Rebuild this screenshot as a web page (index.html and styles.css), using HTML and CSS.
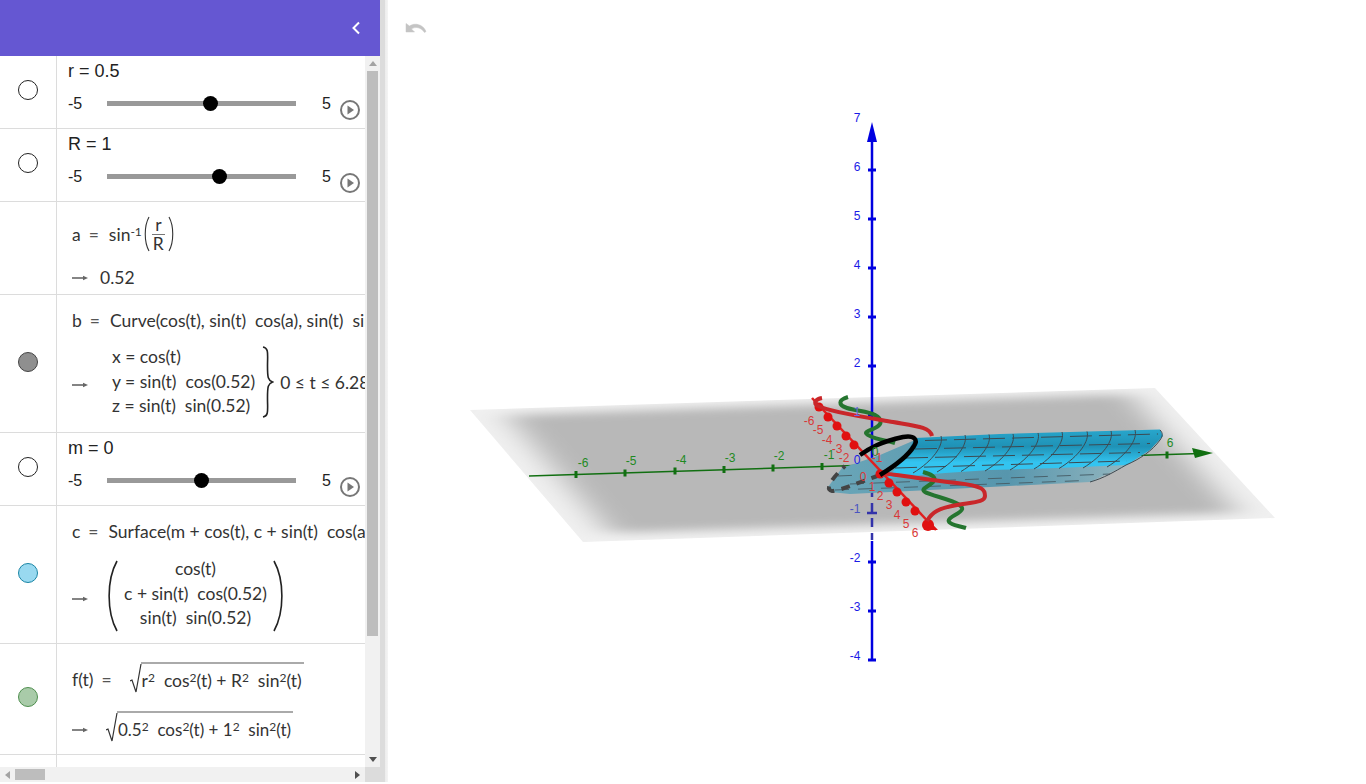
FILE: index.html
```html
<!DOCTYPE html>
<html lang="en">
<head>
<meta charset="utf-8">
<title>GeoGebra 3D</title>
<link rel="stylesheet" href="styles.css">
</head>
<body>
<div class="app">
  <aside class="algebra">
    <header class="algebra-head">
      <svg class="collapse" viewBox="0 0 10 14" width="10" height="14"><path d="M8 1.5 2.5 7 8 12.5" fill="none" stroke="#fff" stroke-width="2"/></svg>
    </header>
    <div class="algebra-main">
      <div class="rows">
        <section class="row row-slider">
          <div class="marble-cell"><span class="marble"></span></div>
          <div class="cell">
            <div class="slider-name">r = 0.5</div>
            <div class="slider-line"><span class="min">-5</span><span class="track"><i class="thumb" style="left:54.5%"></i></span><span class="max">5</span>
              <svg class="play" viewBox="0 0 20 20" width="20" height="20"><circle cx="10" cy="10" r="9" fill="none" stroke="#777" stroke-width="2"/><path d="M7.5 5.5 14 10l-6.5 4.5z" fill="#777"/></svg></div>
          </div>
        </section>
        <section class="row row-slider">
          <div class="marble-cell"><span class="marble"></span></div>
          <div class="cell">
            <div class="slider-name">R = 1</div>
            <div class="slider-line"><span class="min">-5</span><span class="track"><i class="thumb" style="left:59.5%"></i></span><span class="max">5</span>
              <svg class="play" viewBox="0 0 20 20" width="20" height="20"><circle cx="10" cy="10" r="9" fill="none" stroke="#777" stroke-width="2"/><path d="M7.5 5.5 14 10l-6.5 4.5z" fill="#777"/></svg></div>
          </div>
        </section>
        <section class="row row-a">
          <div class="marble-cell"></div>
          <div class="cell math">
            <div class="expr"><span class="lhs">a</span><span class="eq">=</span><span>sin<sup>-1</sup></span>
              <svg class="paren" viewBox="0 0 7 36" width="7" height="36"><path d="M6 1C1 10 1 26 6 35" fill="none" stroke="#333" stroke-width="1.1"/></svg>
              <span class="frac"><span>r</span><span class="frac-den">R</span></span>
              <svg class="paren" viewBox="0 0 7 36" width="7" height="36"><path d="M1 1C6 10 6 26 1 35" fill="none" stroke="#333" stroke-width="1.1"/></svg>
            </div>
            <div class="out out-a"><svg class="arrow" viewBox="0 0 16 6" width="16" height="6"><path d="M0 3h13" stroke="#666" stroke-width="1.6"/><path d="M11 .8 16 3l-5 2.2z" fill="#666"/></svg><span>0.52</span></div>
          </div>
        </section>
        <section class="row row-b">
          <div class="marble-cell"><span class="marble marble-grey"></span></div>
          <div class="cell math">
            <div class="expr expr-b"><span class="lhs">b</span><span class="eq">=</span><span class="nowrap">Curve(cos(t), sin(t)&nbsp; cos(a), sin(t)&nbsp; sin(a), t, 0, 6.28)</span></div>
            <div class="out out-b"><svg class="arrow" viewBox="0 0 16 6" width="16" height="6"><path d="M0 3h13" stroke="#666" stroke-width="1.6"/><path d="M11 .8 16 3l-5 2.2z" fill="#666"/></svg>
              <div class="stack stack-left"><span>x = cos(t)</span><span>y = sin(t)&nbsp; cos(0.52)</span><span>z = sin(t)&nbsp; sin(0.52)</span></div>
              <svg class="brace" viewBox="0 0 12 72" width="12" height="72"><path d="M1 1C7 2 5.500 8 5.500 20S6 34 10.500 36C6 38 5.500 40 5.500 52S7 70 1 71" fill="none" stroke="#222" stroke-width="1.6"/></svg>
              <span class="nowrap range">0 ≤ t ≤ 6.28</span></div>
          </div>
        </section>
        <section class="row row-slider">
          <div class="marble-cell"><span class="marble"></span></div>
          <div class="cell">
            <div class="slider-name">m = 0</div>
            <div class="slider-line"><span class="min">-5</span><span class="track"><i class="thumb" style="left:50%"></i></span><span class="max">5</span>
              <svg class="play" viewBox="0 0 20 20" width="20" height="20"><circle cx="10" cy="10" r="9" fill="none" stroke="#777" stroke-width="2"/><path d="M7.5 5.5 14 10l-6.5 4.5z" fill="#777"/></svg></div>
          </div>
        </section>
        <section class="row row-c">
          <div class="marble-cell"><span class="marble marble-blue"></span></div>
          <div class="cell math">
            <div class="expr expr-c"><span class="lhs">c</span><span class="eq">=</span><span class="nowrap">Surface(m + cos(t), c + sin(t)&nbsp; cos(a), sin(t)&nbsp; sin(a), t, 0, 6.28)</span></div>
            <div class="out out-c"><svg class="arrow" viewBox="0 0 16 6" width="16" height="6"><path d="M0 3h13" stroke="#666" stroke-width="1.6"/><path d="M11 .8 16 3l-5 2.2z" fill="#666"/></svg>
              <svg class="bigparen" viewBox="0 0 10 72" width="10" height="72"><path d="M9 1C-1.500 20-1.500 52 9 71" fill="none" stroke="#222" stroke-width="1.6"/></svg>
              <div class="stack stack-center"><span>cos(t)</span><span>c + sin(t)&nbsp; cos(0.52)</span><span>sin(t)&nbsp; sin(0.52)</span></div>
              <svg class="bigparen" viewBox="0 0 10 72" width="10" height="72"><path d="M1 1C11.500 20 11.500 52 1 71" fill="none" stroke="#222" stroke-width="1.6"/></svg>
            </div>
          </div>
        </section>
        <section class="row row-f">
          <div class="marble-cell"><span class="marble marble-green"></span></div>
          <div class="cell math">
            <div class="expr expr-f"><span class="lhs">f(t)</span><span class="eq">=</span>
              <svg class="radical" viewBox="0 0 12 32" width="12" height="32"><path d="M0 18l2-1 4 12L11 1" fill="none" stroke="#333" stroke-width="1.2"/></svg>
              <span class="radicand">r<sup>2</sup>&nbsp; cos<sup>2</sup>(t) + R<sup>2</sup>&nbsp; sin<sup>2</sup>(t)</span></div>
            <div class="out out-f"><svg class="arrow" viewBox="0 0 16 6" width="16" height="6"><path d="M0 3h13" stroke="#666" stroke-width="1.6"/><path d="M11 .8 16 3l-5 2.2z" fill="#666"/></svg>
              <svg class="radical" viewBox="0 0 12 32" width="12" height="32"><path d="M0 18l2-1 4 12L11 1" fill="none" stroke="#333" stroke-width="1.2"/></svg>
              <span class="radicand">0.5<sup>2</sup>&nbsp; cos<sup>2</sup>(t) + 1<sup>2</sup>&nbsp; sin<sup>2</sup>(t)</span></div>
          </div>
        </section>
        <section class="row row-last"><div class="marble-cell"></div><div class="cell"></div></section>
      </div>
      <div class="vscroll">
        <button class="sb-btn"><i class="tri tri-up"></i></button>
        <div class="vtrack"><div class="vthumb"></div></div>
        <button class="sb-btn"><i class="tri tri-down"></i></button>
      </div>
    </div>
    <div class="hscroll">
      <button class="sb-btn-h"><i class="tri tri-left"></i></button>
      <div class="htrack"><div class="hthumb"></div></div>
      <button class="sb-btn-h"><i class="tri tri-right"></i></button>
      <div class="corner"></div>
    </div>
  </aside>
  <div class="splitter"></div>
  <main class="graphics">
    <svg class="scene" viewBox="388 0 978 782" width="978" height="782">
      <defs>
        <clipPath id="planeClip"><polygon points="470,410 1155,388 1275,518 583,542"/></clipPath>
        <filter id="soft" x="-20%" y="-40%" width="140%" height="180%"><feGaussianBlur stdDeviation="17 5"/></filter>
        <linearGradient id="topGrad" x1="0" y1="0" x2="0" y2="1"><stop offset="0" stop-color="#28a6cc"/><stop offset=".35" stop-color="#1f92b6"/><stop offset=".68" stop-color="#33c4f0"/><stop offset="1" stop-color="#33c4f0"/></linearGradient>
        <linearGradient id="underGrad" x1="0" y1="0" x2="1" y2="0"><stop offset="0" stop-color="#6aa6b8"/><stop offset=".6" stop-color="#5796ad"/><stop offset="1" stop-color="#93b6bf"/></linearGradient>
        <path id="trans" d="M0 0C3 9-8 25-28 37" fill="none" stroke="#3c4a52" stroke-width="1"/>
        <path id="tick" d="M0-3.500V3.500" stroke="#116f11" stroke-width="3"/>
        <path id="ztick" d="M-4 0H4" stroke="#0000e0" stroke-width="3"/>
      </defs>

      <path class="undo" d="M406 23.500v8.500h8.500l-3-3c3.500-2.500 9.500-2 13 3.500l1.500-1c-3-7.500-11.500-9-16.500-5.500z"/>

      <polygon points="470,410 1155,388 1275,518 583,542" fill="#f0f0f0"/>
      <g clip-path="url(#planeClip)"><polygon points="507,415 1130,394 1238,513 610,533" fill="#b8b8b8" filter="url(#soft)"/></g>

      <path d="M872 130V470" stroke="#0000e0" stroke-width="2.500"/>
      <polygon points="872,122 877,142 867,142" fill="#0000e0"/>
      <g>
        <use href="#ztick" x="872" y="170"/><use href="#ztick" x="872" y="219"/><use href="#ztick" x="872" y="268"/><use href="#ztick" x="872" y="317"/><use href="#ztick" x="872" y="366"/><use href="#ztick" x="872" y="415"/>
        <use href="#ztick" x="872" y="562"/><use href="#ztick" x="872" y="611"/><use href="#ztick" x="872" y="660"/>
      </g>
      <path d="M872 541V661" stroke="#0000e0" stroke-width="2.500"/>
      <path d="M872 488V540" stroke="#3333aa" stroke-width="2.500" stroke-dasharray="9 6"/>
      <path d="M867 513H877" stroke="#3333aa" stroke-width="2.500"/>

      <path d="M529 476 870 465" stroke="#116f11" stroke-width="1.500"/>
      <path d="M1120 456 1200 453.500" stroke="#116f11" stroke-width="1.500"/>
      <polygon points="1213,453 1192,448 1195,458" fill="#116f11"/>
      <use href="#tick" x="576" y="474.500"/><use href="#tick" x="625" y="473"/><use href="#tick" x="675" y="471"/><use href="#tick" x="724" y="469.500"/><use href="#tick" x="773" y="468"/><use href="#tick" x="822" y="466.500"/><use href="#tick" x="1167" y="455"/>

      <polygon points="915,440 880,455 842,468 828,487 830,492 850,494 990,487 1090,482 1127,465 1000,460" fill="url(#underGrad)"/>
      <polygon points="915,438 1000,434 1160,429.500 1163,436 1150,450 1127,465 1057,468 990,470 945,473 888,478 904,458" fill="url(#topGrad)"/>
      <g class="surface-lines">
        <path d="M925 440.500 1158 434M915 449 1150 443.500M906 458 1140 452.500M895 468 1127 461"/>
        <path class="under" d="M850 484 1110 474M838 476 860 475M835 490 1085 480.500"/>
      </g>
      <use href="#trans" x="1135" y="430"/><use href="#trans" x="1111" y="431"/><use href="#trans" x="1087" y="431.500"/><use href="#trans" x="1062" y="432"/><use href="#trans" x="1038" y="433"/><use href="#trans" x="1013" y="434"/><use href="#trans" x="989" y="434.500"/><use href="#trans" x="965" y="435"/><use href="#trans" x="941" y="436"/>
      <path d="M1160 430c3 3 3 6 0 10-8 11-20 19-34 25-12 7-22 13-36 17" fill="none" stroke="#3c4a52" stroke-width="1"/>

      <path d="M880 475C862 481 843 490 832 491 825 490 830 480 845 466" fill="none" stroke="#444" stroke-width="4" stroke-dasharray="9 7"/>

      <path d="M812 398 936 530" stroke="#e02020" stroke-width="2.500"/>
      <g fill="#e01010">
        <circle cx="819" cy="407" r="4.500"/><circle cx="828" cy="417" r="4.500"/><circle cx="837" cy="426" r="4.500"/><circle cx="846" cy="436" r="4.500"/><circle cx="854" cy="445" r="4.500"/>
        <circle cx="880" cy="474" r="4.500"/><circle cx="889" cy="483" r="4.500"/><circle cx="897" cy="492" r="4.500"/><circle cx="906" cy="502" r="4.500"/><circle cx="915" cy="511" r="4.500"/><circle cx="928" cy="525" r="6"/>
      </g>
      <path d="M938 530 930 522 927 530z" fill="#e01010"/>

      <path class="curve-green" d="M848 397C838 400 838 405 847 408S868 411 875 415 883 424 875 428 862 432 870 436 885 440 895 443"/>
      <path class="curve-green" d="M923 472C930 474 938 477 933 482S920 489 925 492 952 500 958 504 964 510 955 515 948 522 952 524 960 526 966 528"/>
      <path class="curve-red" d="M822 398C816 399 812 403 818 406 830 412 870 418 893 422S930 427 932 436"/>
      <path class="curve-red" d="M880 473C900 475 930 480 957 483S985 490 985 496 975 502 957 505 932 512 927 521"/>
      <path d="M860 455C870 448 880 442 903 437 915 435 918 440 914 446 908 456 893 467 880 475" fill="none" stroke="#000" stroke-width="4.500"/>

      <g class="lbl lbl-z">
        <text x="857" y="122">7</text><text x="857" y="171">6</text><text x="857" y="220">5</text><text x="857" y="269">4</text><text x="857" y="318">3</text><text x="857" y="367">2</text><text x="857" y="416" class="faint">1</text><text x="857" y="464">0</text><text x="855" y="513" class="dim">-1</text><text x="855" y="562">-2</text><text x="855" y="611">-3</text><text x="855" y="660">-4</text>
      </g>
      <g class="lbl lbl-x">
        <text x="583" y="467">-6</text><text x="631" y="465">-5</text><text x="681" y="464">-4</text><text x="730" y="462">-3</text><text x="779" y="460">-2</text><text x="829" y="459">-1</text><text x="875" y="456">0</text><text x="1170" y="447">6</text>
      </g>
      <g class="lbl lbl-y">
        <text x="809" y="425">-6</text><text x="818" y="434">-5</text><text x="827" y="444">-4</text><text x="837" y="453">-3</text><text x="844" y="462">-2</text><text x="877" y="462">-1</text><text x="863" y="481">0</text><text x="872" y="491">1</text><text x="880" y="500">2</text><text x="889" y="509">3</text><text x="897" y="519">4</text><text x="906" y="528">5</text><text x="915" y="537">6</text>
      </g>
    </svg>
  </main>
</div>
</body>
</html>
```

FILE: styles.css
```css
* { box-sizing: border-box; }
html, body { margin: 0; padding: 0; background: #fff; overflow: hidden; }
body { height: 784px; }
.app { display: flex; height: 782px; font-family: "Liberation Sans", Arial, sans-serif; color: #111; }

.algebra { width: 380px; flex: none; display: flex; flex-direction: column; }
.algebra-head { height: 56px; flex: none; background: #6557d2; display: flex; align-items: center; justify-content: flex-end; padding-right: 19px; }
.algebra-main { flex: 1; min-height: 0; display: flex; }
.rows { flex: 1; min-width: 0; overflow: hidden; background: #fff; }

.row { display: flex; border-bottom: 1px solid #dcdcdc; overflow: hidden; }
.row-slider { height: 73px; }
.row-a { height: 93px; }
.row-b { height: 138px; }
.row-c { height: 138px; }
.row-f { height: 111px; }
.row-last { height: 40px; border-bottom: 0; }

.marble-cell { width: 57px; flex: none; border-right: 1px solid #dcdcdc; display: flex; align-items: center; justify-content: center; padding-bottom: 4px; }
.marble { width: 20px; height: 20px; border-radius: 50%; border: 1px solid #222; background: #fff; display: block; }
.marble-grey { background: #8f8f8f; border-color: #444; }
.marble-blue { background: #99d9f0; border-color: #1a85a5; }
.marble-green { background: #a9cba9; border-color: #4f8f4f; }

.cell { flex: 1; min-width: 0; padding-left: 11px; overflow: hidden; }
.slider-name { font-size: 18px; line-height: 20px; padding-top: 5px; color: #222; }
.slider-line { display: flex; align-items: center; height: 20px; margin-top: 13px; font-size: 16px; color: #222; }
.min { width: 39px; flex: none; }
.track { width: 189px; flex: none; height: 5px; background: #999; position: relative; margin-top: -1px; }
.thumb { position: absolute; top: -5px; width: 15px; height: 15px; margin-left: -7.5px; border-radius: 50%; background: #000; }
.max { margin-left: 26px; width: 8px; flex: none; }
.play { margin-left: 10px; margin-top: 12px; flex: none; }

.math { font-family: Lato, "Liberation Sans", sans-serif; font-size: 17.5px; color: #333; padding-left: 15px; white-space: nowrap; }
.nowrap { white-space: nowrap; }
.expr { display: flex; align-items: center; }
.lhs { margin-right: 8px; }
.eq { margin-right: 10px; color: #555; }
sup { font-size: 12px; line-height: 0; vertical-align: 5px; }
.paren { margin-left: 1px; flex: none; }
.frac { display: inline-flex; flex-direction: column; align-items: center; line-height: 18px; padding: 0 1px; margin: 0 1px; }
.frac-den { border-top: 1px solid #777; padding: 0 1px; }
.out { display: flex; align-items: center; }
.arrow { flex: none; }

.row-a .expr { margin-top: 13px; height: 38px; }
.out-a { margin-top: 14px; height: 20px; }
.out-a .arrow { margin-right: 12px; margin-top: 2px; }

.expr-b { margin-top: 15px; height: 20px; }
.out-b { margin-top: 16px; height: 72px; }
.out-b .arrow { margin-top: 6px; margin-right: 24px; }
.stack { display: flex; flex-direction: column; line-height: 24.500px; flex: none; }
.stack-left { align-items: flex-start; }
.stack-center { align-items: center; width: 155px; }
.brace { margin-left: 7px; flex: none; }
.range { margin-left: 6px; }

.expr-c { margin-top: 15px; height: 20px; }
.out-c { margin-top: 17px; height: 72px; }
.out-c .bigparen { margin-top: 4px; }
.out-c .arrow { margin-top: 10px; margin-right: 20px; }
.bigparen { flex: none; }

.expr-f { margin-top: 18px; height: 34px; }
.expr-f .radical { margin-left: 8px; }
.out-f { margin-top: 15px; height: 34px; font-size: 17px; }
.out-f .arrow { margin-right: 18px; margin-top: 4px; }
.radical { flex: none; }
.radicand { border-top: 2px solid #aaa; margin-left: -1px; padding: 5px 2px 0 1px; margin-top: -3px; line-height: 24px; }

.vscroll { width: 15px; flex: none; background: #f1f1f1; display: flex; flex-direction: column; padding-left: 1px; }
.sb-btn { width: 13px; height: 15px; border: 0; padding: 0; background: transparent; display: flex; align-items: center; justify-content: center; flex: none; }
.vtrack { flex: 1; padding-right: 3px; }
.vthumb { width: 11px; margin-left: 1px; height: 565px; background: #bdbdbd; }
.hscroll { height: 15px; flex: none; background: #f1f1f1; display: flex; align-items: center; }
.sb-btn-h { width: 15px; height: 15px; border: 0; padding: 0; background: transparent; display: flex; align-items: center; justify-content: center; flex: none; }
.htrack { flex: 1; }
.hthumb { width: 30px; height: 11px; background: #bdbdbd; }
.corner { width: 15px; height: 15px; background: #dcdcdc; flex: none; }
.tri { display: block; width: 0; height: 0; border: 4px solid transparent; }
.tri-up { border-top: 0; border-bottom: 5px solid #a3a3a3; }
.tri-down { border-bottom: 0; border-top: 5px solid #505050; }
.tri-left { border-left: 0; border-right: 5px solid #a3a3a3; }
.tri-right { border-right: 0; border-left: 5px solid #505050; }

.splitter { width: 8px; flex: none; background: linear-gradient(to right, #dcdcdc 0, #dcdcdc 5px, #ececec 5px, #f4f4f4 100%); }
.graphics { flex: 1; min-width: 0; background: #fff; }
.scene { display: block; }
.undo { fill: #c4c4c4; stroke: #c4c4c4; stroke-width: .5; }
.surface-lines path { fill: none; stroke: #3c4a52; stroke-width: 1; stroke-dasharray: 22 7; }
.surface-lines .under { stroke: #49626c; stroke-dasharray: 14 9; }
.curve-green { fill: none; stroke: #25752f; stroke-width: 4; }
.curve-red { fill: none; stroke: #c9272a; stroke-width: 4; }
.lbl text { font-family: "Liberation Sans", Arial, sans-serif; font-size: 12px; text-anchor: middle; }
.lbl-z text { fill: #1a1ae6; }
.lbl-z .faint { fill: #6a6ae0; }
.lbl-z .dim { fill: #4a55c0; }
.lbl-x text { fill: #1f8a1f; }
.lbl-y text { fill: #d83838; }
```
